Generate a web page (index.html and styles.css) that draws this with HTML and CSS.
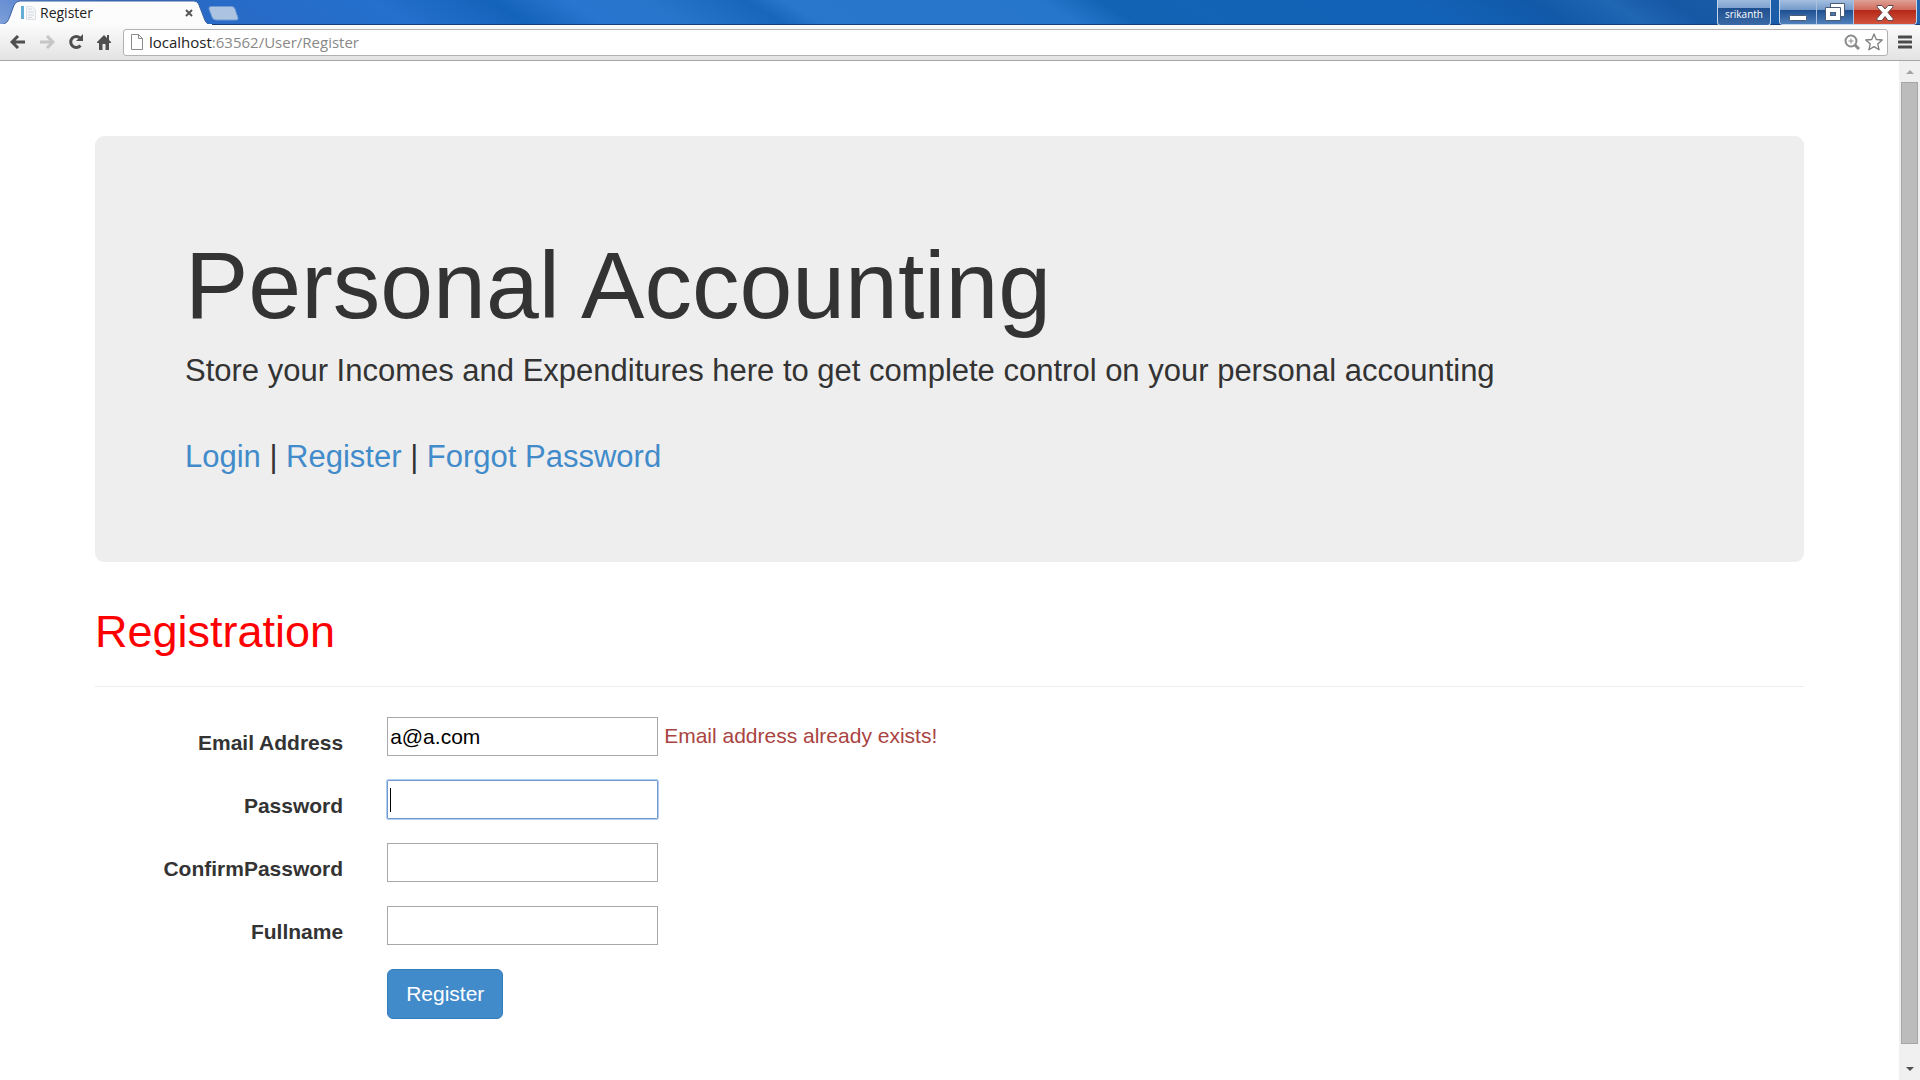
FILE: index.html
```html
<!DOCTYPE html>
<html lang="en">
<head>
  <meta charset="UTF-8">
  <meta name="viewport" content="width=device-width, initial-scale=1.0">
  <title>Register</title>
  <link rel="stylesheet" href="styles.css">
</head>
<body>
  <header class="titlebar">
    <div class="tab">
      <svg class="tab-shape" width="212" height="25" viewBox="0 0 212 25">
        <path d="M0 25 C7 24 8 21 10 16 L14 5 Q16 1 20 1 H194 Q198 1 199 5 L204 18 Q206 25 212 25 Z" fill="#fcfcfd" stroke="#3c62a0" stroke-width="1"/>
        <path d="M0 25 H212" stroke="#fcfcfd" stroke-width="2"/>
      </svg>
      <svg class="favicon" width="16" height="16" viewBox="0 0 16 16">
        <rect x="0" y="1" width="3" height="13" fill="#62aed4"/>
        <path d="M5.500 1.500 H11 L14.500 5 V14.500 H5.500 Z" fill="#f4f6f8" stroke="#dde1e6"/>
        <path d="M7 4 H11 M7 7 H13 M7 10 H13 M7 12.500 H11" stroke="#d3d7dd"/>
      </svg>
      <span class="tab-title">Register</span>
      <button class="tab-close" aria-label="Close tab">
        <svg width="8" height="8" viewBox="0 0 8 8"><path d="M1 1 L7 7 M7 1 L1 7" stroke="#555" stroke-width="2"/></svg>
      </button>
    </div>
    <button class="new-tab" aria-label="New tab">
      <svg width="32" height="15" viewBox="0 0 32 15">
        <path d="M3 .5 H24 Q26 .5 27 3 L30 12 Q30.500 14 28 14 H8 Q5 14 4 11 L1 3 Q.5 .5 3 .5 Z" fill="#adc3e2" stroke="#6f9bd3"/>
      </svg>
    </button>
    <div class="window-buttons">
      <button class="profile">srikanth</button>
      <div class="caption">
        <button class="caption-button" aria-label="Minimize">
          <svg width="18" height="7" viewBox="0 0 18 7"><rect x=".5" y="1.500" width="17" height="5" rx="1" fill="#fff" stroke="#4c5b75"/></svg>
        </button>
        <button class="caption-button" aria-label="Restore">
          <svg width="20" height="18" viewBox="0 0 20 18">
            <path d="M5.500 .5 H19.500 V13.500 H5.500 Z" fill="#fff" stroke="#4c5b75"/>
            <path d="M.5 4.500 H15.500 V17.500 H.5 Z" fill="#fff" stroke="#4c5b75"/>
            <rect x="5.500" y="9.500" width="5" height="3" fill="#4c78b2" stroke="#4c5b75"/>
          </svg>
        </button>
        <button class="caption-button caption-close" aria-label="Close">
          <svg width="18" height="16" viewBox="0 0 18 16">
            <path d="M1 .5 H6 L9 4 L12 .5 H17 V2 L12 7.500 L17 13.500 V15.500 H12 L9 11.500 L6 15.500 H1 V13.500 L6 7.500 L1 2 Z" fill="#fff" stroke="#5d4950"/>
          </svg>
        </button>
      </div>
    </div>
  </header>

  <nav class="toolbar">
    <button class="tool" aria-label="Back">
      <svg width="16" height="14" viewBox="0 0 16 14"><path d="M8 1 L2 7 L8 13 M2 7 H15" fill="none" stroke="#4f4f4f" stroke-width="3"/></svg>
    </button>
    <button class="tool" aria-label="Forward">
      <svg width="16" height="14" viewBox="0 0 16 14"><path d="M8 1 L14 7 L8 13 M14 7 H1" fill="none" stroke="#c6c6c6" stroke-width="3"/></svg>
    </button>
    <button class="tool" aria-label="Reload">
      <svg width="16" height="16" viewBox="0 0 16 16">
        <path d="M12.500 11.500 A5.500 5.500 0 1 1 12 4" fill="none" stroke="#4f4f4f" stroke-width="3"/>
        <path d="M15 0 V7 H8 Z" fill="#4f4f4f"/>
      </svg>
    </button>
    <button class="tool" aria-label="Home">
      <svg width="14" height="16" viewBox="0 0 14 16">
        <path d="M7 1 L10 4 V1 H12 V6 L14 8 V9 H12 V16 H8.500 V10 H5.500 V16 H2 V9 H0 V8 Z" fill="#4f4f4f"/>
      </svg>
    </button>
    <div class="omnibox">
      <svg width="12" height="16" viewBox="0 0 12 16">
        <path d="M.5 .5 H7.500 L11.500 4.500 V15.500 H.5 Z M7.500 .5 V4.500 H11.500" fill="#fff" stroke="#8b8b8b"/>
      </svg>
      <span class="url"><span class="url-host">localhost</span>:63562/User/Register</span>
      <svg width="16" height="16" viewBox="0 0 16 16">
        <circle cx="7" cy="7" r="5.500" fill="none" stroke="#8a8a8a" stroke-width="2"/>
        <path d="M4.500 7 H9.500 M7 4.500 V9.500" stroke="#8a8a8a"/>
        <path d="M11 11 L15 15" stroke="#8a8a8a" stroke-width="3"/>
      </svg>
      <svg width="18" height="18" viewBox="0 0 18 18">
        <path d="M9 1 L11.300 6.500 L17.200 7 L12.700 10.900 L14.100 16.800 L9 13.600 L3.900 16.800 L5.300 10.900 L.8 7 L6.700 6.500 Z" fill="#fff" stroke="#7d7d7d" stroke-width="1.300" stroke-linejoin="round"/>
      </svg>
    </div>
    <button class="tool" aria-label="Menu">
      <svg width="14" height="14" viewBox="0 0 14 14"><path d="M1 2 H13 M1 7 H13 M1 12 H13" stroke="#4b4b4b" stroke-width="3" stroke-linecap="round"/></svg>
    </button>
  </nav>

  <div class="viewport">
    <main class="page">
      <div class="container">
        <div class="jumbotron">
          <h1>Personal Accounting</h1>
          <p>Store your Incomes and Expenditures here to get complete control on your personal accounting</p>
          <p class="links"><a href="#">Login</a> | <a href="#">Register</a> | <a href="#">Forgot Password</a></p>
        </div>

        <h2>Registration</h2>
        <hr>

        <form class="form-horizontal">
          <div class="form-group">
            <label for="email">Email Address</label>
            <div class="field">
              <input type="text" id="email" value="a@a.com">
              <span class="text-danger">Email address already exists!</span>
            </div>
          </div>
          <div class="form-group">
            <label for="password">Password</label>
            <div class="field"><input type="password" id="password" class="active"></div>
          </div>
          <div class="form-group">
            <label for="confirm">ConfirmPassword</label>
            <div class="field"><input type="password" id="confirm"></div>
          </div>
          <div class="form-group">
            <label for="fullname">Fullname</label>
            <div class="field"><input type="text" id="fullname"></div>
          </div>
          <div class="form-group">
            <div class="field field-offset"><button type="button" class="btn">Register</button></div>
          </div>
        </form>
      </div>
    </main>

    <div class="scrollbar">
      <svg width="8" height="4" viewBox="0 0 8 4"><path d="M0 4 L4 0 L8 4 Z" fill="#a3a3a3"/></svg>
      <div class="thumb"></div>
      <svg width="8" height="4" viewBox="0 0 8 4"><path d="M0 0 L4 4 L8 0 Z" fill="#505050"/></svg>
    </div>
  </div>
</body>
</html>
```
FILE: styles.css
```css
* {
  box-sizing: border-box;
}

body {
  margin: 0;
  height: 100vh;
  display: flex;
  flex-direction: column;
  overflow: hidden;
  background: #fff;
  color: #333;
  font-family: "Liberation Sans", Arial, sans-serif;
  font-size: 21px;
  line-height: 30px;
}

button {
  padding: 0;
  border: 0;
  background: none;
  font-family: inherit;
}

svg {
  display: block;
  flex: none;
}

/* window frame */
.titlebar {
  flex: none;
  display: flex;
  height: 25px;
  border-bottom: 1px solid #163f78;
  background: linear-gradient(31deg, #7f9fd9 0%, #2a68c4 8%, #2470cc 21%, #1463ba 27%, #2876cf 31%, #2774cb 35%, #1866bc 40%, #2877cc 42%, #2676cc 55%, #1363b5 58%, #1262b8 74%, #1259a8 80%, #1f66b3 84%, #1758a5 87%, #2467ad 100%);
  font-family: "Open Sans", "Noto Sans", sans-serif;
}

.tab {
  position: relative;
  display: flex;
  align-items: center;
  width: 208px;
  height: 25px;
  padding: 0 15px 0 21px;
}

.tab-shape {
  position: absolute;
  left: 0;
  top: 0;
}

.favicon,
.tab-title,
.tab-close {
  position: relative;
}

.tab-title {
  flex: 1;
  margin-left: 3px;
  color: #222;
  font-size: 14px;
  line-height: 24px;
}

.new-tab {
  align-self: flex-start;
  padding-top: 6px;
}

.window-buttons {
  display: flex;
  align-items: flex-start;
  gap: 8px;
  margin-left: auto;
  padding-right: 3px;
}

.profile {
  height: 26px;
  padding: 2px 7px 0;
  border: 1px solid #c5d6ec;
  border-top: 0;
  border-radius: 0 0 4px 4px;
  background: linear-gradient(#9db9dc 0, #7fa3d0 8px, #1f4f8f 8px, #3a69a5 100%);
  color: #fff;
  font-size: 10px;
  line-height: 22px;
}

.caption {
  display: flex;
  height: 25px;
  border: 1px solid #c5d6ec;
  border-top: 0;
  border-radius: 0 0 4px 4px;
  overflow: hidden;
}

.caption-button {
  display: flex;
  align-items: flex-end;
  justify-content: center;
  width: 37px;
  padding-bottom: 3px;
  border-right: 1px solid #a9c1de;
  background: linear-gradient(#a5bfe0 0, #7399ca 10px, #1d4f90 10px, #4f80ba 100%);
}

.caption-close {
  width: 62px;
  border-right: 0;
  background: linear-gradient(#dfa095 0, #cf6a5a 10px, #b52718 10px, #d2533c 100%);
}

.toolbar {
  flex: none;
  display: flex;
  align-items: center;
  gap: 13px;
  height: 36px;
  padding: 0 8px 1px 10px;
  border-bottom: 1px solid #a5a5a5;
  background: linear-gradient(#fbfbfc, #e3e3e3);
  font-family: "Open Sans", "Noto Sans", sans-serif;
}

.omnibox {
  flex: 1;
  display: flex;
  align-items: center;
  gap: 5px;
  height: 27px;
  margin: 0 -3px 0 -1px;
  padding: 0 4px 0 7px;
  border: 1px solid #b2b2b2;
  border-radius: 3px;
  background: #fff;
}

.url {
  flex: 1;
  margin-left: 1px;
  color: #888;
  font-size: 15px;
  line-height: 24px;
}

.url-host {
  color: #222;
}

/* page */
.viewport {
  flex: 1;
  min-height: 0;
  display: flex;
}

.page {
  flex: 1;
  padding-top: 75px;
}

.container {
  width: 90%;
  margin: 0 auto;
}

.jumbotron {
  padding: 102px 90px 83px;
  border-radius: 9px;
  background: #eee;
}

.jumbotron h1 {
  margin: 0 0 15px;
  font-size: 95px;
  font-weight: 400;
  line-height: 95px;
}

.jumbotron p {
  margin: 0;
  font-size: 31px;
  line-height: 45px;
}

.jumbotron .links {
  margin-top: 41px;
}

a {
  color: #428bca;
  text-decoration: none;
}

h2 {
  margin: 45px 0 30px;
  color: #f00;
  font-size: 45px;
  font-weight: 400;
  line-height: 49px;
}

hr {
  margin: 0 0 30px;
  border: 0;
  border-top: 1px solid #eee;
}

.form-horizontal {
  margin: 0 -22px;
}

.form-group {
  display: flex;
  margin-bottom: 24px;
}

.form-group label {
  width: calc(100% / 6);
  padding: 11px 22px 0 0;
  margin-bottom: -2px;
  font-weight: 700;
  text-align: right;
}

.field {
  flex: 1;
  display: flex;
  gap: 6px;
  padding-left: 22px;
}

.field-offset {
  margin-left: calc(100% / 6);
}

.field input {
  width: 271px;
  height: 39px;
  padding: 2px;
  border: 1px solid #a9a9a9;
  background: #fff;
  color: #000;
  font-family: inherit;
  font-size: 21px;
}

.field .active {
  border-color: #6f9ad3;
  border-radius: 1px;
  outline: 1px solid #b3cdee;
  /* text caret */
  background: linear-gradient(#000, #000) 2px center / 1px 24px no-repeat #fff;
}

.text-danger {
  padding-top: 4px;
  color: #a94442;
}

.btn {
  height: 50px;
  padding: 0 18px;
  border: 1px solid #357ebd;
  border-radius: 6px;
  background: #428bca;
  color: #fff;
  font-size: 21px;
}

.scrollbar {
  flex: none;
  display: flex;
  flex-direction: column;
  align-items: center;
  gap: 8px;
  width: 21px;
  padding: 9px 2px;
  background: #f0f0f0;
}

.thumb {
  flex: 1;
  width: 17px;
  margin-bottom: 15px;
  border: 1px solid #a6a6a6;
  background: #bcbcbc;
}
```
